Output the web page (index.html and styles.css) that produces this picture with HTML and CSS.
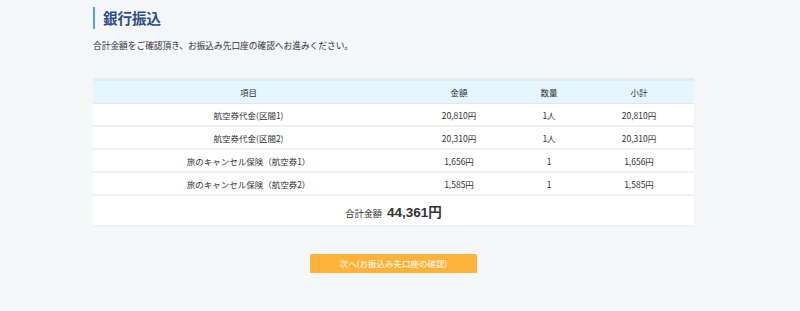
FILE: index.html
```html
<!DOCTYPE html>
<html lang="ja">
<head>
    <meta charset="UTF-8">
    <meta name="viewport" content="width=device-width, initial-scale=1.0">
    <title>銀行振込</title>
    <link rel="stylesheet" href="styles.css">
</head>
<body>
    <div class="main-content">
        <h1 class="page-title">銀行振込</h1>
        <p class="lead">合計金額をご確認頂き、お振込み先口座の確認へお進みください。</p>
        <table class="price-table">
            <thead>
                <tr>
                    <th class="col-item">項目</th>
                    <th class="col-price">金額</th>
                    <th class="col-qty">数量</th>
                    <th class="col-sub">小計</th>
                </tr>
            </thead>
            <tbody>
                <tr>
                    <td>航空券代金(区間1)</td>
                    <td>20,810円</td>
                    <td>1人</td>
                    <td>20,810円</td>
                </tr>
                <tr>
                    <td>航空券代金(区間2)</td>
                    <td>20,310円</td>
                    <td>1人</td>
                    <td>20,310円</td>
                </tr>
                <tr>
                    <td>旅のキャンセル保険（航空券1）</td>
                    <td>1,656円</td>
                    <td>1</td>
                    <td>1,656円</td>
                </tr>
                <tr>
                    <td>旅のキャンセル保険（航空券2）</td>
                    <td>1,585円</td>
                    <td>1</td>
                    <td>1,585円</td>
                </tr>
                <tr class="total-row">
                    <td colspan="4">
                        <span class="total-label">合計金額</span>
                        <span class="total-amount">44,361円</span>
                    </td>
                </tr>
            </tbody>
        </table>
        <div class="actions">
            <button type="button">次へ(お振込み先口座の確認)</button>
        </div>
    </div>
</body>
</html>
```

FILE: styles.css
```css
body {
    margin: 0;
    font-family: "Noto Sans CJK JP", "Noto Sans", sans-serif;
    background: #f5f6f8;
    color: #333;
}
.main-content {
    width: 601px;
    margin-left: 93px;
    padding-top: 7px;
}
.page-title {
    margin: 0;
    height: 22px;
    line-height: 22px;
    padding-left: 8px;
    border-left: 2px solid #4da3ee;
    font-size: 14.5px;
    font-weight: bold;
    color: #2c4d8c;
}
.lead {
    margin: 9px 0 0;
    font-size: 8.7px;
    line-height: 16px;
}
.price-table {
    width: 100%;
    margin-top: 24px;
    border-collapse: collapse;
    border-top: 3px solid #e8e9eb;
    font-size: 8.5px;
    text-align: center;
}
.price-table th {
    background: #e6f6ff;
    font-weight: normal;
    height: 22px;
    padding: 0;
    border-bottom: 1px solid #dde8ef;
}
.price-table td {
    background: #fff;
    height: 21px;
    padding: 0;
    border-bottom: 2px solid #f0f1f3;
}
.col-item { width: 311px; }
.col-price { width: 110px; }
.col-qty { width: 70px; }
.col-sub { width: 110px; }
.price-table .total-row td {
    height: 29px;
}
.total-label {
    font-size: 9.2px;
}
.total-amount {
    font-family: "Liberation Sans", "Noto Sans CJK JP", sans-serif;
    font-size: 13.5px;
    font-weight: bold;
    margin-left: 3px;
}
.actions {
    text-align: center;
    margin-top: 21px;
}
.actions button {
    width: 167px;
    height: 19px;
    padding: 0;
    font-family: inherit;
    font-size: 8.5px;
    color: #fff;
    background: #ffb238;
    border: none;
    border-radius: 2px;
    box-shadow: 0 1px 0 #f0c23a;
    cursor: pointer;
}
```
